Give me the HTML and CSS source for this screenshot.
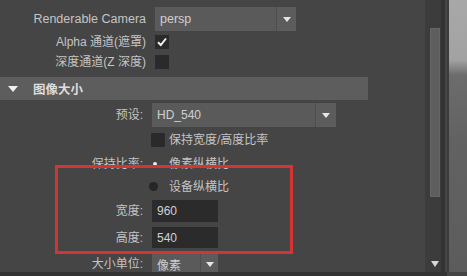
FILE: index.html
```html
<!DOCTYPE html>
<html>
<head>
<meta charset="utf-8">
<link rel="stylesheet" href="styles.css">
</head>
<body>
<div class="window">
  <div class="main">
    <div class="content">
      <div class="row r-camera">
        <span class="label top">Renderable Camera</span>
        <div class="dropdown dd-camera"><span class="dd-text">persp</span><span class="dd-arrow"></span></div>
      </div>
      <div class="row r-alpha">
        <span class="label top">Alpha 通道(遮罩)</span>
        <span class="checkbox top-ctl"><svg width="14" height="14" viewBox="0 0 14 14"><path d="M3 7.2 L5.8 10 L11 3.5" fill="none" stroke="#f2f2f2" stroke-width="2"/></svg></span>
      </div>
      <div class="row r-depth">
        <span class="label top">深度通道(Z 深度)</span>
        <span class="checkbox top-ctl"></span>
      </div>
      <div class="header">
        <span class="tri"></span>
        <span class="header-text">图像大小</span>
      </div>
      <div class="row r-preset">
        <span class="label">预设:</span>
        <div class="dropdown dd-preset"><span class="dd-text">HD_540</span><span class="dd-arrow"></span></div>
      </div>
      <div class="row r-keep">
        <span class="label"></span>
        <span class="checkbox"></span>
        <span class="opt-text">保持宽度/高度比率</span>
      </div>
      <div class="row r-radio1">
        <span class="label">保持比率:</span>
        <span class="radio on"></span>
        <span class="opt-text">像素纵横比</span>
      </div>
      <div class="row r-radio2">
        <span class="label"></span>
        <span class="radio"></span>
        <span class="opt-text">设备纵横比</span>
      </div>
      <div class="row r-width">
        <span class="label">宽度:</span>
        <div class="field">960</div>
      </div>
      <div class="row r-height">
        <span class="label">高度:</span>
        <div class="field">540</div>
      </div>
      <div class="row r-unit">
        <span class="label">大小单位:</span>
        <div class="dropdown dd-unit"><span class="dd-text">像素</span><span class="dd-arrow"></span></div>
      </div>
    </div>
    <div class="scrollbar">
      <div class="track">
        <div class="thumb"></div>
        <div class="down"></div>
      </div>
    </div>
    <div class="edge"></div>
  </div>
  <div class="bottom"></div>
  <div class="annot"></div>
</div>
</body>
</html>
```

FILE: styles.css
```css
html, body {
  margin: 0;
  padding: 0;
  background: #454545;
}
body {
  width: 467px;
  height: 276px;
  overflow: hidden;
  font-family: "Liberation Sans", "Noto Sans CJK SC", sans-serif;
  font-size: 12px;
  color: #c4c4c4;
}
.window {
  position: relative;
  width: 467px;
  height: 276px;
  display: flex;
  flex-direction: column;
}
.main {
  display: flex;
  height: 272px;
  overflow: hidden;
}
.content {
  width: 425px;
  flex: none;
  display: flex;
  flex-direction: column;
  padding-top: 7px;
  background: #454545;
}
.row {
  display: flex;
  align-items: center;
  flex: none;
}
.label {
  width: 143px;
  margin-right: 9px;
  text-align: right;
  white-space: nowrap;
  line-height: 14px;
  flex: none;
}
.label.top {
  width: 146px;
}
.r-camera .label {
  font-size: 12.5px;
}
.r-camera { height: 24px; }
.r-alpha { height: 21px; }
.r-depth { height: 19px; }
.r-preset { height: 24px; margin-top: 3px; }
.r-keep { height: 26px; }
.r-radio1 { height: 21px; }
.r-radio2 { height: 25px; }
.r-width { height: 22px; margin-top: 1px; }
.r-height { height: 21px; margin-top: 5px; }
.r-unit { height: 22px; margin-top: 5px; }

.dropdown {
  display: flex;
  height: 100%;
  background: #5a5a5a;
  box-sizing: border-box;
}
.dd-camera { width: 141px; }
.dd-preset { width: 184px; }
.dd-unit { width: 66px; }
.dd-text {
  flex: 1;
  padding-left: 5px;
  display: flex;
  align-items: center;
  color: #cfcfcf;
  white-space: nowrap;
}
.dd-camera .dd-text { font-size: 12.5px; }
.dd-arrow {
  width: 19px;
  border-left: 1px solid #4e4e4e;
  background: #5c5c5c;
  display: flex;
  align-items: center;
  justify-content: center;
}
.dd-preset .dd-arrow { width: 20px; }
.dd-unit .dd-arrow { width: 17px; }
.dd-arrow::after {
  content: "";
  width: 0;
  height: 0;
  border-left: 4px solid transparent;
  border-right: 4px solid transparent;
  border-top: 5px solid #e6e6e6;
}
.checkbox {
  width: 14px;
  height: 14px;
  background: #2a2a2a;
  display: block;
  flex: none;
  margin-left: -1px;
}
.checkbox.top-ctl {
  margin-left: 0;
}
.checkbox svg { display: block; }
.opt-text {
  margin-left: 3px;
  white-space: nowrap;
  line-height: 14px;
}
.r-keep .opt-text { margin-left: 4px; }
.radio {
  width: 9px;
  height: 9px;
  border-radius: 50%;
  background: #262626;
  margin-left: -3px;
  margin-right: 8px;
  flex: none;
  display: flex;
  align-items: center;
  justify-content: center;
}
.radio.on {
  background: transparent;
  margin-left: -2px;
  margin-right: 7px;
}
.radio.on::after {
  content: "";
  width: 4px;
  height: 4px;
  border-radius: 50%;
  background: #eeeeee;
}
.field {
  width: 66px;
  height: 100%;
  background: #2b2b2b;
  color: #d2d2d2;
  box-sizing: border-box;
  padding-left: 5px;
  display: flex;
  align-items: center;
}
.header {
  width: 368px;
  height: 23px;
  margin-top: 6px;
  background: #5d5d5d;
  display: flex;
  align-items: center;
  flex: none;
}
.tri {
  width: 0;
  height: 0;
  margin-left: 8px;
  border-left: 5px solid transparent;
  border-right: 5px solid transparent;
  border-top: 6px solid #f0f0f0;
}
.header-text {
  margin-left: 15px;
  color: #dedede;
  font-weight: bold;
  font-size: 12.5px;
}
.scrollbar {
  width: 22px;
  flex: none;
  background: #454545;
}
.track {
  margin-left: 0;
  height: 100%;
  background: #3c3c3c;
  border-right: 4px solid #333333;
  box-sizing: border-box;
  width: 20px;
  display: flex;
  flex-direction: column;
  align-items: flex-start;
}
.thumb {
  margin-top: 28px;
  margin-left: 5px;
  width: 10px;
  height: 169px;
  background: #5e5e5e;
  border: 1px solid #666;
  box-sizing: border-box;
}
.down {
  margin-top: auto;
  margin-bottom: 5px;
  margin-left: 6px;
  width: 0;
  height: 0;
  border-left: 4px solid transparent;
  border-right: 4px solid transparent;
  border-top: 6px solid #d8d8d8;
}
.edge {
  flex: 1;
  background: linear-gradient(to bottom, #a8a8a8 0, #a2a2a2 60px, #6c6c6c 75px, #626262 140px, #5c5c5c 100%);
  border-left: 2px solid #3c3c3c;
}
.bottom {
  height: 4px;
  background: #333333;
  width: 447px;
}
.annot {
  position: absolute;
  left: 55px;
  top: 165px;
  width: 238px;
  height: 89px;
  border: 3px solid #d33434;
  box-sizing: border-box;
}
```
